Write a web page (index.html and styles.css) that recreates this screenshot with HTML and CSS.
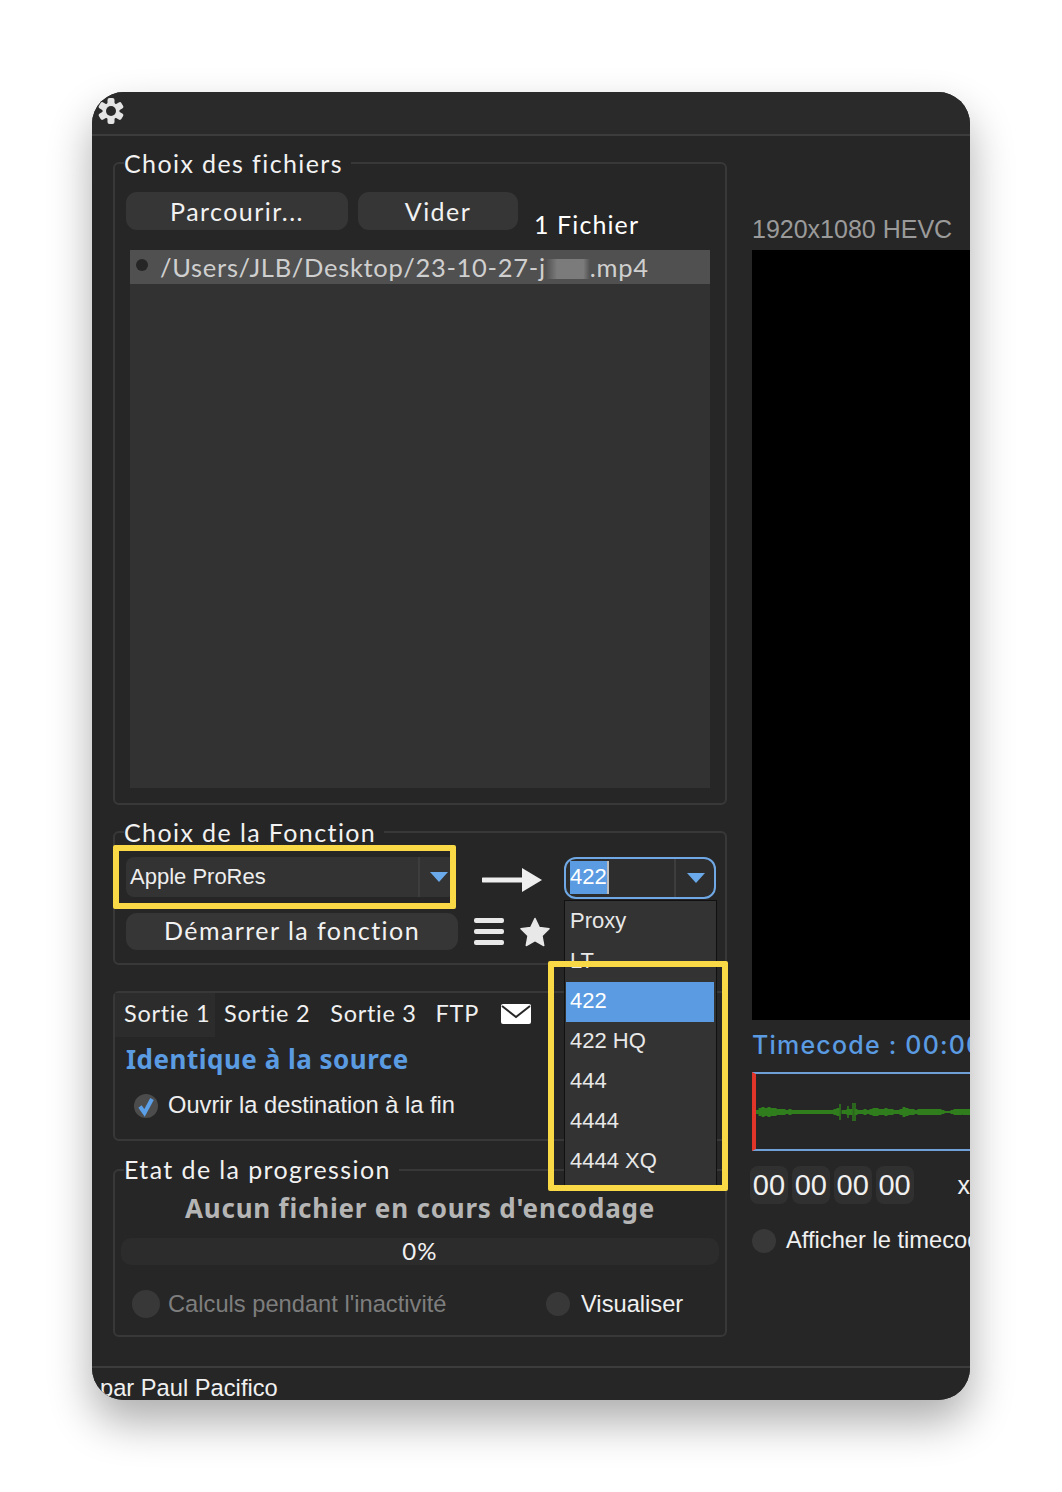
FILE: index.html
```html
<!DOCTYPE html>
<html lang="fr">
<head>
<meta charset="utf-8">
<title>Encodage</title>
<link rel="stylesheet" href="styles.css">
</head>
<body>
<div class="window">
  <header class="topbar">
    <svg class="gear" viewBox="0 0 26 26"><g fill="#e4e4e4"><rect x="9.500" y="0" width="7" height="26" rx="2"/><rect x="9.500" y="0" width="7" height="26" rx="2" transform="rotate(60 13 13)"/><rect x="9.500" y="0" width="7" height="26" rx="2" transform="rotate(120 13 13)"/></g><circle cx="13" cy="13" r="8.500" fill="#e4e4e4"/><circle cx="13" cy="13" r="5" fill="#2a2a2a"/></svg>
  </header>
  <main class="main">
    <div class="left">
      <fieldset class="panel files">
        <legend>Choix des fichiers</legend>
        <div class="file-actions">
          <button class="btn browse">Parcourir...</button>
          <button class="btn clear">Vider</button>
          <span class="count">1 Fichier</span>
        </div>
        <div class="list">
          <div class="row"><i class="dot"></i><span class="path">/Users/JLB/Desktop/23-10-27-j<i class="blurred"></i>.mp4</span></div>
        </div>
      </fieldset>

      <fieldset class="panel func">
        <legend>Choix de la Fonction</legend>
        <div class="func-row">
          <div class="select main-select">
            <span class="select-value">Apple ProRes</span>
            <span class="select-arrow"><i class="tri"></i></span>
            <div class="hl hl-left"></div>
          </div>
          <svg class="arrow" viewBox="0 0 60 26"><path d="M1 13H42" stroke="#eee" stroke-width="5" stroke-linecap="round"/><path d="M40 1L60 13L40 25Z" fill="#eee"/></svg>
          <div class="select sub-select">
            <span class="select-value"><span class="sel-text">422</span></span>
            <span class="select-arrow"><i class="tri"></i></span>
            <ul class="dropdown">
              <li>Proxy</li>
              <li>LT</li>
              <li class="active">422</li>
              <li>422 HQ</li>
              <li>444</li>
              <li>4444</li>
              <li>4444 XQ</li>
            </ul>
            <div class="hl hl-right"></div>
          </div>
        </div>
        <div class="start-row">
          <button class="btn start">Démarrer la fonction</button>
          <div class="burger"><i></i><i></i><i></i></div>
          <svg class="star" viewBox="0 0 30 30"><path d="M15 1.5L19.3 10.6L29 11.8L21.9 18.6L23.7 28.5L15 23.7L6.3 28.5L8.1 18.6L1 11.8L10.7 10.6Z" fill="#e8e8e8" stroke="#e8e8e8" stroke-linejoin="round" stroke-width="1.5"/></svg>
        </div>
      </fieldset>

      <section class="output">
        <div class="tabs">
          <span class="tab current">Sortie 1</span>
          <span class="tab">Sortie 2</span>
          <span class="tab">Sortie 3</span>
          <span class="tab">FTP</span>
          <svg class="mail" viewBox="0 0 30 20"><rect width="30" height="20" rx="2" fill="#fff"/><path d="M1 2L15 13L29 2" fill="none" stroke="#262626" stroke-width="2"/></svg>
        </div>
        <div class="same">Identique à la source</div>
        <div class="check-row">
          <svg class="check" viewBox="0 0 24 24"><circle cx="12" cy="12" r="12" fill="#4c4c4c"/><path d="M6 12.500L10.500 19L18 5" fill="none" stroke="#5a9fe8" stroke-width="4"/></svg>
          <span>Ouvrir la destination à la fin</span>
        </div>
      </section>

      <fieldset class="panel progress">
        <legend>Etat de la progression</legend>
        <div class="status">Aucun fichier en cours d'encodage</div>
        <div class="bar">0%</div>
        <div class="options">
          <label class="opt dim"><i class="radio big"></i>Calculs pendant l'inactivité</label>
          <label class="opt"><i class="radio"></i>Visualiser</label>
        </div>
      </fieldset>
    </div>

    <aside class="right">
      <div class="meta">1920x1080 HEVC</div>
      <div class="video"></div>
      <div class="timecode">Timecode : 00:00:00:00</div>
      <div class="wave">
        <svg viewBox="0 0 214 30"><g stroke="#2f7d1c" fill="none">
          <path stroke-width="3" d="M1 13v4M4 11v8M7 10v10M10 11v8M13 10v10M16 11v8M19 11v8M22 12v6M25 12v6M28 12v6M31 13v4M34 12v6M37 13v4M40 13v4M43 13v4M46 13v4M49 13v4M52 13v4M55 13v4M58 13v4M61 13v4M64 13v4M67 13v4M70 13v4M73 13v4M76 13v4M79 12v6M82 11v8M87 13v4M90 13v4M92 12v6M95 12v6M100 12v6M103 13v4M106 13v4M109 12v6M112 13v4M115 12v6M118 11v8M121 11v8M124 12v6M127 12v6M130 11v8M133 12v6M136 12v6M139 13v4M142 13v4M145 12v6M148 10v10M151 11v8M154 12v6M157 12v6M160 13v4M163 12v6M166 12v6M169 12v6M172 12v6M175 12v6M178 12v6M181 12v6M184 12v6M187 13v4M190 14v2M193 14v2M196 13v4M199 12v6M202 12v6M205 12v6M208 12v6M211 12v6M213 12v6"/>
          <path stroke-width="1.500" d="M84 7v16M92 9v12M97 6v18M99 6v18"/>
        </g></svg>
      </div>
      <div class="time-row">
        <span class="tbox">00</span><span class="tbox">00</span><span class="tbox">00</span><span class="tbox">00</span>
        <span class="x">x</span>
      </div>
      <label class="opt tc"><i class="radio"></i>Afficher le timecode</label>
    </aside>
  </main>
  <footer class="footer">par Paul Pacifico</footer>
</div>
</body>
</html>
```

FILE: styles.css
```css
* { box-sizing: border-box; }
html, body { margin: 0; height: 1492px; overflow: hidden; background: #fff; }
body {
  padding: 92px 92px 0;
  font-family: "Liberation Sans", Arial, sans-serif;
  color: #f0f0f0;
}
.window {
  width: 878px;
  height: 1308px;
  background: #262626;
  border-radius: 32px;
  overflow: hidden;
  display: flex;
  flex-direction: column;
  box-shadow: 0 22px 44px rgba(0, 0, 0, .32);
}
.topbar {
  flex: none;
  height: 44px;
  background: #2a2a2a;
  border-bottom: 2px solid #3c3c3c;
  padding: 6px 6px 0;
}
.gear { display: block; width: 26px; height: 26px; }
.main {
  flex: 1;
  min-height: 0;
  display: flex;
  gap: 25px;
  padding: 14px 0 0 21px;
}
.left { flex: none; width: 614px; display: flex; flex-direction: column; }
.right { flex: none; width: 218px; display: flex; flex-direction: column; white-space: nowrap; }

.panel {
  margin: 0;
  border: 2px solid #383838;
  border-radius: 6px;
  min-width: 0;
}
legend {
  padding: 0 8px 0 0;
  margin-left: -2px;
  height: 26px;
  font: 25px/26px Lato, sans-serif;
  letter-spacing: 1.400px;
  color: #f2f2f2;
  white-space: nowrap;
}
.btn {
  border: 0;
  margin: 0;
  padding: 0 0 1px;
  background: #363636;
  color: #f2f2f2;
  font: 25px Lato, sans-serif;
  letter-spacing: 1.450px;
  border-radius: 11px;
}

.files { height: 655px; padding: 16px 15px 15px 11px; }
.file-actions { display: flex; gap: 10px; height: 38px; }
.browse { width: 222px; height: 38px; }
.clear { width: 160px; height: 38px; }
.count { margin: 16px 0 0 6px; font: 25px/32px Lato, sans-serif; letter-spacing: 1.1px; color: #fff; white-space: nowrap; }
.list { margin: 20px 0 0 4px; width: 580px; height: 538px; background: #323232; }
.row {
  height: 34px;
  background: #505050;
  display: flex;
  align-items: center;
  padding-left: 6px;
  font: 25.500px Lato, sans-serif;
  letter-spacing: .7px;
  color: #cfcfcf;
}
.path { white-space: nowrap; }
.dot { width: 12px; height: 12px; margin: -4px 12px 0 0; border-radius: 50%; background: #262626; }
.blurred { display: inline-block; width: 44px; height: 20px; vertical-align: -2px; background: linear-gradient(90deg, #505050, #7b7b7b 25%, #7b7b7b 85%, #505050); }

.func { margin-top: 14px; height: 146px; padding: 12px 9px 12px 11px; }
.func-row { display: flex; align-items: flex-start; height: 42px; }
.select { flex: none; position: relative; display: flex; height: 40px; background: #333; border-radius: 8px; font-size: 22px; color: #eee; }
.main-select { width: 330px; }
.sub-select { width: 152px; height: 42px; margin-left: 22px; border: 2px solid #6fa8e4; border-radius: 12px; background: #2d2d2d; }
.select-value { flex: 1; padding: 0 0 1px 4px; display: flex; align-items: center; }
.sel-text { background: #5a9be2; border-right: 2px solid #bbb; color: #fff; padding: 3px 0 4px; }
.select-arrow { flex: none; width: 38px; border-left: 2px solid #3d3d3d; display: flex; align-items: center; justify-content: center; padding-left: 2px; }
.sub-select .select-arrow { width: 40px; }
.tri { width: 0; height: 0; border: 9px solid transparent; border-top: 10px solid #6aa9ea; border-bottom: 0; }
.arrow { flex: none; width: 60px; height: 26px; margin: 10px 0 0 26px; }

.dropdown {
  position: absolute;
  z-index: 2;
  top: 41px;
  left: -2px;
  width: 153px;
  height: 286px;
  margin: 0;
  padding: 1px 2px 1px 1px;
  list-style: none;
  background: #333;
  border: 1px solid #111;
  font-size: 22px;
}
.dropdown li { height: 40px; line-height: 38px; padding-left: 4px; color: #e8e8e8; }
.dropdown li.active { background: #5a9be2; color: #fff; }

.hl { position: absolute; z-index: 3; border: 6px solid #f9d945; border-radius: 2px; pointer-events: none; }
.hl-left { left: -13px; top: -12px; width: 343px; height: 64px; }
.hl-right { left: -18px; top: 102px; width: 180px; height: 230px; }

.start-row { display: flex; align-items: center; margin-top: 14px; }
.start { width: 332px; height: 37px; padding-bottom: 3px; }
.burger { display: flex; flex-direction: column; gap: 6px; width: 30px; margin-left: 16px; }
.burger i { height: 5px; border-radius: 2px; background: #e8e8e8; }
.star { width: 30px; height: 30px; margin-left: 16px; }

.output {
  margin-top: 26px;
  height: 150px;
  border: 2px solid #383838;
  border-radius: 6px;
}
.tabs { display: flex; align-items: flex-start; height: 44px; font: 23.500px/40px Lato, sans-serif; letter-spacing: .7px; color: #f0f0f0; white-space: nowrap; }
.tab { height: 44px; padding: 0 11px 0 9px; }
.tab.current { background: #2c2c2c; width: 100px; padding: 0 0 0 9px; }
.tab:nth-child(4) { padding: 0 0 0 8px; }
.mail { flex: none; width: 30px; height: 20px; margin: 11px 0 0 22px; }
.same { margin: 6px 0 0 11px; font: bold 26px/32px "Noto Sans", Lato, sans-serif; letter-spacing: .5px; color: #5a9be2; }
.check-row { display: flex; align-items: center; gap: 10px; margin: 17px 0 0 19px; font-size: 23.700px; color: #eee; }
.check { width: 24px; height: 24px; }

.progress { margin-top: 16px; height: 180px; padding: 11px 6px 0 6px; }
.progress legend { margin-left: 3px; line-height: 25px; }
.status { text-align: center; font: bold 26px/28px "Noto Sans", Lato, sans-serif; letter-spacing: .8px; color: #b5b5b5; }
.bar { margin-top: 16px; height: 27px; border-radius: 10px; background: #2c2c2c; text-align: center; font: 24px/25px Lato, sans-serif; letter-spacing: 1.2px; color: #f2f2f2; }
.options { display: flex; margin: 25px 0 0 11px; }
.opt { display: flex; align-items: center; gap: 10px; font-size: 23.700px; color: #f0f0f0; }
.opt.dim { width: 414px; gap: 8px; color: #7e7e7e; }
.opt:not(.dim):not(.tc) { gap: 11px; }
.radio { flex: none; width: 24px; height: 24px; border-radius: 50%; background: #383838; }
.radio.big { width: 28px; height: 28px; }

.meta { margin-top: 64px; height: 30px; line-height: 30px; font-size: 25px; color: #9a9a9a; }
.video { flex: none; margin-top: 6px; height: 770px; background: #000; }
.timecode { margin-top: 10px; height: 30px; font: 500 25px/30px Inter, Lato, sans-serif; letter-spacing: 1.2px; color: #5a9be2; }
.wave {
  margin-top: 12px;
  height: 79px;
  border-top: 2px solid #6fa0d8;
  border-bottom: 2px solid #6fa0d8;
  border-left: 4px solid #e2352a;
  display: flex;
  align-items: center;
}
.wave svg { flex: none; display: block; width: 214px; height: 30px; }
.time-row { display: flex; gap: 4px; margin: 15px 0 0 -2px; height: 38px; font-size: 29px; color: #f0f0f0; }
.tbox { width: 38px; height: 38px; line-height: 38px; text-align: center; background: #303030; border-radius: 8px; }
.x { margin-left: 40px; line-height: 38px; font-size: 25px; }
.tc { margin-top: 23px; gap: 10px; }
.footer {
  flex: none;
  height: 34px;
  border-top: 2px solid #3c3c3c;
  background: #262626;
  padding-left: 8px;
  font-size: 23.700px;
  line-height: 41px;
  color: #f0f0f0;
  overflow: hidden;
}
```
